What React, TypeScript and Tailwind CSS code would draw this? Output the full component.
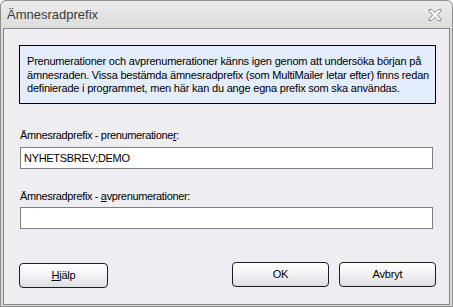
import React from "react"

function CloseGlyph() {
	return (
		<svg width="16" height="14" viewBox="0 0 16 14" className="block">
			<path
				d="M2 1.5h3l3 3 3-3h3v1.5l-3.5 4 3.5 4v1.5h-3l-3-3-3 3h-3v-1.5l3.5-4-3.5-4z"
				fill="#f4f4f4"
				stroke="#8c8c8c"
				strokeWidth="1"
				strokeLinejoin="round"
			/>
		</svg>
	)
}

function Button({ children }: { children: React.ReactNode }) {
	return (
		<button className="h-[25px] rounded-[4px] border border-[#1e1e1e] bg-gradient-to-b from-[#ffffff] via-[#f3f3f5] to-[#dcdce4] text-[11px] tracking-[-0.2px] text-black">
			{children}
		</button>
	)
}

export default function App() {
	return (
		<div
			className="w-[453px] h-[307px] bg-[#d9d9d9] rounded-t-[6px] border border-[#8e8e8e] flex flex-col text-black"
			style={{ fontFamily: '"Liberation Sans", Arial, sans-serif' }}
		>
			{/* Title bar */}
			<div className="h-[27px] flex items-center justify-between pl-[6px] pr-[9px] rounded-t-[6px] bg-gradient-to-b from-[#ececec] to-[#dcdcdc]">
				<span className="text-[13px] text-[#3a3a3a] leading-none">Ämnesradprefix</span>
				<CloseGlyph />
			</div>

			{/* Client area */}
			<div className="flex-1 mx-[2px] mb-[1px] border border-[#858585] bg-[#eeeef2] pl-[15px] pr-[13px] pt-[16px] flex flex-col">
				<div className="h-[59px] border border-black bg-[#e3edfb] px-[7px] pt-[9px] text-[11px] leading-[13.5px] tracking-[-0.2px] whitespace-nowrap">
					Prenumerationer och avprenumerationer känns igen genom att undersöka början på
					<br />
					ämnesraden. Vissa bestämda ämnesradprefix (som MultiMailer letar efter) finns redan
					<br />
					definierade i programmet, men här kan du ange egna prefix som ska användas.
				</div>

				<div className="mt-[24px] pl-[1px] text-[11px] leading-[14px] tracking-[-0.35px]">
					Ämnesradprefix - prenumeratione<span className="underline">r</span>:
				</div>
				<div className="mt-[5px] ml-[1px] mr-[3px] h-[22px] border border-[#7f7f7f] bg-white flex items-center px-[3px] text-[11px] tracking-[-0.3px]">
					NYHETSBREV;DEMO
				</div>

				<div className="mt-[20px] pl-[1px] text-[11px] leading-[14px] tracking-[-0.35px]">
					Ämnesradprefix - <span className="underline">a</span>vprenumerationer:
				</div>
				<div className="mt-[4px] ml-[1px] mr-[3px] h-[22px] border border-[#7f7f7f] bg-white" />

				<div className="mt-[33px] flex">
					<div className="w-[89px]">
						<Button>
							<span className="inline-block w-[87px]">
								<span className="underline">H</span>jälp
							</span>
						</Button>
					</div>
					<div className="ml-auto flex gap-[10px]">
						<div className="w-[97px] flex">
							<Button>
								<span className="inline-block w-[95px]">OK</span>
							</Button>
						</div>
						<div className="w-[97px] flex">
							<Button>
								<span className="inline-block w-[95px]">Avbryt</span>
							</Button>
						</div>
					</div>
				</div>
			</div>
		</div>
	)
}
